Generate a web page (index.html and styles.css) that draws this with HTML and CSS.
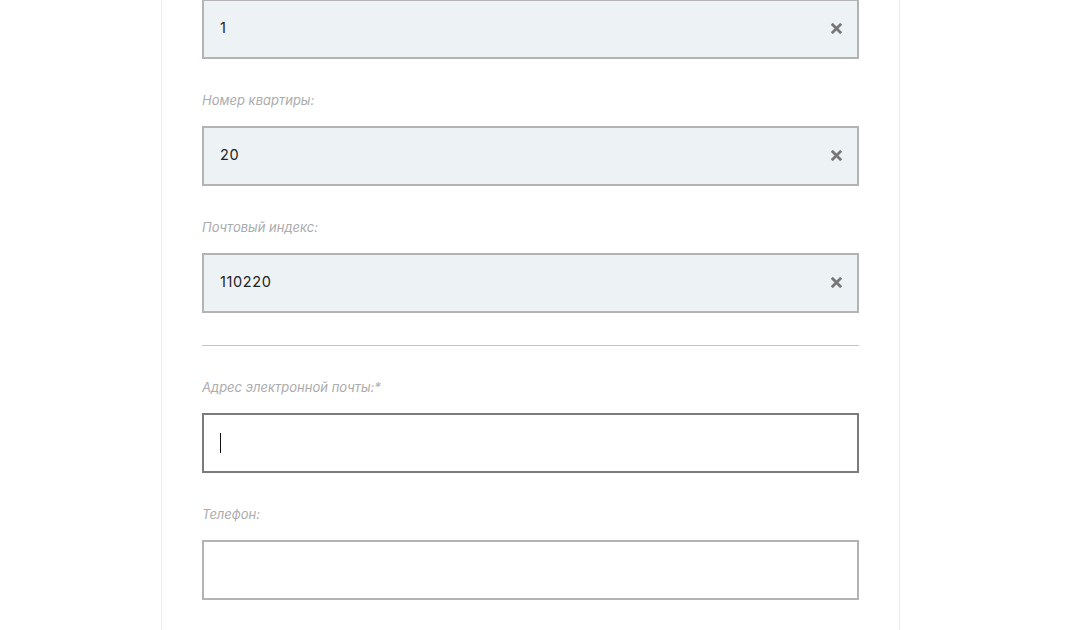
FILE: index.html
```html
<!DOCTYPE html>
<html lang="ru">
<head>
<meta charset="utf-8">
<link rel="stylesheet" href="styles.css">
</head>
<body>
<div class="card">
  <div class="form">
    <div class="field first">
      <div class="input filled"><span class="value">1</span>
        <svg class="clear" viewBox="0 0 11 11" width="11" height="11"><path d="M1.8 1.8 L9.2 9.2 M9.2 1.8 L1.8 9.2" stroke="#777" stroke-width="2.8" stroke-linecap="square"/></svg>
      </div>
    </div>
    <div class="field">
      <div class="label">Номер квартиры:</div>
      <div class="input filled"><span class="value">20</span>
        <svg class="clear" viewBox="0 0 11 11" width="11" height="11"><path d="M1.8 1.8 L9.2 9.2 M9.2 1.8 L1.8 9.2" stroke="#777" stroke-width="2.8" stroke-linecap="square"/></svg>
      </div>
    </div>
    <div class="field">
      <div class="label">Почтовый индекс:</div>
      <div class="input filled"><span class="value">110220</span>
        <svg class="clear" viewBox="0 0 11 11" width="11" height="11"><path d="M1.8 1.8 L9.2 9.2 M9.2 1.8 L1.8 9.2" stroke="#777" stroke-width="2.8" stroke-linecap="square"/></svg>
      </div>
    </div>
    <hr class="sep">
    <div class="field">
      <div class="label">Адрес электронной почты:*</div>
      <div class="input focused"><span class="caret"></span></div>
    </div>
    <div class="field">
      <div class="label">Телефон:</div>
      <div class="input"></div>
    </div>
  </div>
</div>
</body>
</html>
```
FILE: styles.css
```css
html, body {
  margin: 0;
  padding: 0;
  background: #ffffff;
  height: 100%;
  overflow: hidden;
}
body {
  font-family: Inter, "Noto Sans", Arial, sans-serif;
}
.card {
  margin-left: 161px;
  width: 737px;
  min-height: 700px;
  border-left: 1px solid #eeeeee;
  border-right: 1px solid #eeeeee;
  background: #fff;
  box-sizing: content-box;
}
.form {
  padding: 0 40px;
  margin-top: -1px;
}
.field {
  margin-bottom: 31px;
}
.label {
  height: 20px;
  line-height: 20px;
  margin-bottom: 16px;
  font-size: 13px;
  font-style: italic;
  color: #acacac;
}
.input {
  box-sizing: border-box;
  height: 60px;
  border: 2px solid #b3b3b3;
  background: #fff;
  display: flex;
  align-items: center;
  padding: 0 15px 0 16px;
  justify-content: space-between;
}
.input.filled {
  background: #edf2f5;
}
.input.focused {
  border-color: #7b7b7b;
}
.value {
  font-size: 14.5px;
  color: #222;
  letter-spacing: 0.6px;
  margin-bottom: 4px;
}
.clear {
  margin-bottom: 1px;
}
.caret {
  display: block;
  width: 1px;
  height: 20px;
  background: #111;
}
.sep {
  border: 0;
  border-top: 1px solid #c4c4c4;
  margin: 32px 0 31px;
  height: 0;
}
.field:last-child {
  margin-bottom: 0;
}
```
